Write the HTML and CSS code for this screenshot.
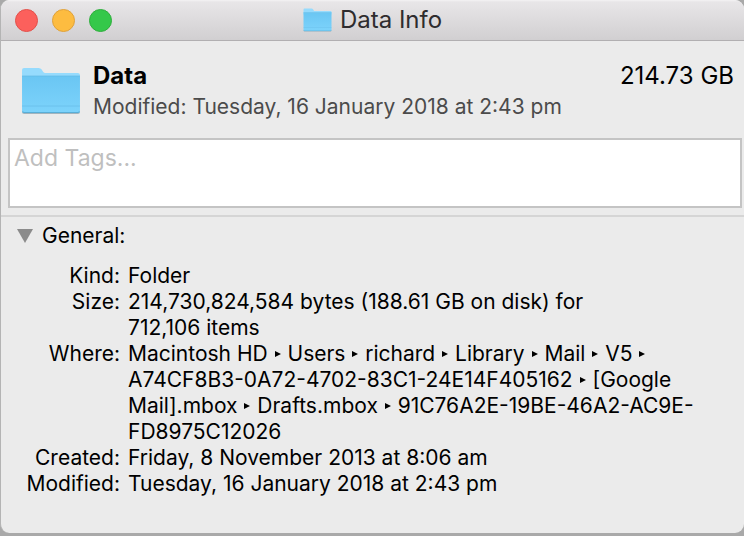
FILE: index.html
```html
<!DOCTYPE html>
<html lang="en">
<head>
    <meta charset="UTF-8">
    <meta name="viewport" content="width=device-width, initial-scale=1.0">
    <title>Data Info</title>
    <link rel="stylesheet" href="styles.css">
</head>
<body>
    <!-- Folder drawing, shared by the title bar and the header -->
    <svg class="defs" width="0" height="0" aria-hidden="true">
        <defs>
            <linearGradient id="front" x1="0" y1="0" x2="0" y2="1">
                <stop offset="0" stop-color="#6ac6f3"/>
                <stop offset="1" stop-color="#7dd3fb"/>
            </linearGradient>
        </defs>
        <symbol id="folder" viewBox="0 0 58 48" preserveAspectRatio="none">
            <path d="M1 44h56v1q0 2-2 2H3q-2 0-2-2z" fill="#a3b4bd"/>
            <path d="M1 10V3q0-2 2-2h14q2 0 3 1.500l1.500 2.500q.7 1 2 1H55q2 0 2 2v5H1z" fill="#96dbfd"/>
            <path d="M1 9h56v35q0 2-2 2H3q-2 0-2-2z" fill="url(#front)"/>
            <path d="M1 9h56" stroke="#62b9e3" stroke-width=".7"/>
            <path d="M1 39h56" stroke="#62b9e4" stroke-width=".6"/>
            <path d="M1.500 44.500q.5 1 1.500 1h52q1 0 1.500-1" fill="none" stroke="#59aed7"/>
        </symbol>
    </svg>

    <div class="window">
        <header class="titlebar">
            <div class="controls">
                <button type="button" class="control close" aria-label="Close"></button>
                <button type="button" class="control minimize" aria-label="Minimize"></button>
                <button type="button" class="control zoom" aria-label="Zoom"></button>
            </div>
            <h1 class="title">
                <svg class="title-icon" aria-hidden="true"><use href="#folder"/></svg>
                Data Info
            </h1>
        </header>

        <section class="summary">
            <svg class="folder-icon" aria-hidden="true"><use href="#folder"/></svg>
            <div class="summary-text">
                <div class="summary-top">
                    <h2 class="name">Data</h2>
                    <span class="size">214.73 GB</span>
                </div>
                <p class="modified">Modified: Tuesday, 16 January 2018 at 2:43 pm</p>
            </div>
        </section>

        <textarea class="tags" placeholder="Add Tags..." aria-label="Add Tags"></textarea>

        <section class="general">
            <button type="button" class="toggle" aria-expanded="true">
                <svg class="triangle" viewBox="0 0 16 14" aria-hidden="true"><path d="M0 0h16L8 14z" fill="#8b8b8b"/></svg>
                General:
            </button>
            <dl class="details">
                <dt>Kind:</dt>
                <dd>Folder</dd>
                <dt>Size:</dt>
                <dd>214,730,824,584 bytes (188.61 GB on disk) for<br>712,106 items</dd>
                <dt>Where:</dt>
                <dd>
                    Macintosh HD <i class="arrow"></i> Users <i class="arrow"></i> richard <i class="arrow"></i> Library <i class="arrow"></i> Mail <i class="arrow"></i> V5 <i class="arrow"></i><br>
                    A74CF8B3-0A72-4702-83C1-24E14F405162 <i class="arrow"></i> [Google<br>
                    Mail].mbox <i class="arrow"></i> Drafts.mbox <i class="arrow"></i> 91C76A2E-19BE-46A2-AC9E-<br>
                    FD8975C12026
                </dd>
                <dt>Created:</dt>
                <dd>Friday, 8 November 2013 at 8:06 am</dd>
                <dt>Modified:</dt>
                <dd>Tuesday, 16 January 2018 at 2:43 pm</dd>
            </dl>
        </section>
    </div>
</body>
</html>
```
FILE: styles.css
```css
* {
    box-sizing: border-box;
}

body {
    margin: 0;
    min-height: 100vh;
    padding-bottom: 3px;
    display: flex;
    flex-direction: column;
    background: #a9a9a9;
    font-family: Inter, "Liberation Sans", sans-serif;
    font-size: 21px;
    line-height: 26px;
    color: #000;
}

h1, h2, p, dl, dd {
    margin: 0;
}

button {
    padding: 0;
    border: none;
    background: none;
    font: inherit;
    color: inherit;
}

.defs {
    position: absolute;
}

.window {
    flex: 1;
    background: #ebebeb;
    border-left: 1px solid #b4b4b4;
    border-radius: 9px;
    overflow: hidden;
}

.titlebar {
    display: grid;
    grid-template-columns: 1fr auto 1fr;
    align-items: center;
    height: 41px;
    padding: 0 14px;
    background: linear-gradient(#f4f3f4, #e8e6e8 2px, #d1cfd1);
    border-bottom: 1px solid #b1afb1;
}

.controls {
    display: flex;
    gap: 14px;
}

.control {
    width: 23px;
    height: 23px;
    border-radius: 50%;
}

.close {
    background: #fc605c;
    border: 1px solid #e2504b;
}

.minimize {
    background: #fdbc40;
    border: 1px solid #dfa13a;
}

.zoom {
    background: #34c84a;
    border: 1px solid #2fae3d;
}

.title {
    display: flex;
    align-items: center;
    gap: 8px;
    font-size: 24px;
    font-weight: 400;
    color: #2e2c2e;
}

.title-icon {
    width: 29px;
    height: 24px;
}

.summary {
    display: flex;
    align-items: center;
    gap: 12px;
    padding: 19px 10px 16px 20px;
}

.folder-icon {
    flex: none;
    width: 60px;
    height: 48px;
}

.summary-text {
    flex: 1;
}

.summary-top {
    display: flex;
    justify-content: space-between;
    line-height: 32px;
}

.name {
    font-size: 24px;
    font-weight: 700;
}

.size {
    font-size: 24px;
}

.modified {
    line-height: 30px;
    color: #4b4b4b;
}

.tags {
    display: block;
    width: calc(100% - 9px);
    height: 70px;
    margin: 0 2px 7px 7px;
    padding: 5px 4px;
    border: 2px solid #c4c4c4;
    background: #fff;
    font: inherit;
    font-size: 23px;
    resize: none;
    outline: none;
}

.tags::placeholder {
    color: #bfbfbf;
    opacity: 1;
}

.general {
    border-top: 2px solid #d5d5d5;
    padding: 6px 16px 32px;
}

.toggle {
    display: flex;
    align-items: center;
    gap: 9px;
}

.triangle {
    width: 16px;
    height: 14px;
}

.details {
    display: grid;
    grid-template-columns: 103px 1fr;
    column-gap: 8px;
    padding-top: 14px;
}

.details dt {
    text-align: right;
}

.details dd {
    white-space: nowrap;
}

.arrow {
    display: inline-block;
    margin: 0 1px 4px;
    border-left: 6px solid #000;
    border-top: 3px solid transparent;
    border-bottom: 3px solid transparent;
}
```
